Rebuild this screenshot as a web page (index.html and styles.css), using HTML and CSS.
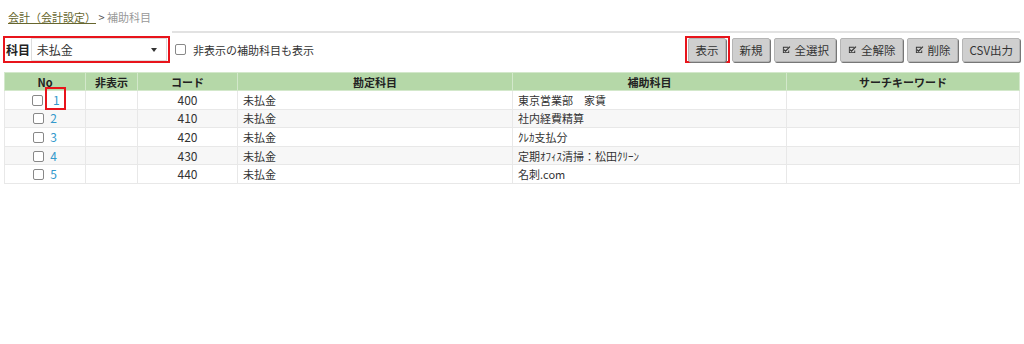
FILE: index.html
```html
<!DOCTYPE html>
<html lang="ja">
<head>
    <meta charset="UTF-8">
    <meta name="viewport" content="width=device-width, initial-scale=1.0">
    <title>補助科目</title>
    <link rel="stylesheet" href="styles.css">
</head>
<body>
    <div class="page">
        <div class="crumb">
            <a href="#">会計（会計設定）</a> <span class="sep">&gt;</span> 補助科目
        </div>
        <div class="rule"></div>
        <div class="toolbar">
            <div class="filter">
                <div class="field mark">
                    <span class="field-label">科目</span>
                    <div class="select">未払金<span class="caret"></span></div>
                </div>
                <label class="chk"><span class="box"></span>非表示の補助科目も表示</label>
            </div>
            <div class="buttons">
                <span class="btn-wrap mark"><button class="btn">表示</button></span>
                <button class="btn">新規</button>
                <button class="btn"><svg class="ico" viewBox="0 0 10 10"><path d="M1 2h6v1H2v5h5V6h1v3H1z"/><path d="M2.6 4.6l1.3 1.3L8.4 1.4l.9.9-5.4 5.4-2.2-2.2z"/></svg>全選択</button>
                <button class="btn"><svg class="ico" viewBox="0 0 10 10"><path d="M1 2h6v1H2v5h5V6h1v3H1z"/><path d="M2.6 4.6l1.3 1.3L8.4 1.4l.9.9-5.4 5.4-2.2-2.2z"/></svg>全解除</button>
                <button class="btn"><svg class="ico" viewBox="0 0 10 10"><path d="M1 2h6v1H2v5h5V6h1v3H1z"/><path d="M2.6 4.6l1.3 1.3L8.4 1.4l.9.9-5.4 5.4-2.2-2.2z"/></svg>削除</button>
                <button class="btn">CSV出力</button>
            </div>
        </div>
        <table class="list">
            <thead>
                <tr>
                    <th class="c-no">No</th>
                    <th class="c-hide">非表示</th>
                    <th class="c-code">コード</th>
                    <th class="c-acc">勘定科目</th>
                    <th class="c-sub">補助科目</th>
                    <th>サーチキーワード</th>
                </tr>
            </thead>
            <tbody>
                <tr>
                    <td class="num"><span class="box"></span><a href="#" class="mark-link">1</a></td>
                    <td></td>
                    <td class="center">400</td>
                    <td>未払金</td>
                    <td>東京営業部　家賃</td>
                    <td></td>
                </tr>
                <tr>
                    <td class="num"><span class="box"></span><a href="#">2</a></td>
                    <td></td>
                    <td class="center">410</td>
                    <td>未払金</td>
                    <td>社内経費精算</td>
                    <td></td>
                </tr>
                <tr>
                    <td class="num"><span class="box"></span><a href="#">3</a></td>
                    <td></td>
                    <td class="center">420</td>
                    <td>未払金</td>
                    <td>ｸﾚｶ支払分</td>
                    <td></td>
                </tr>
                <tr>
                    <td class="num"><span class="box"></span><a href="#">4</a></td>
                    <td></td>
                    <td class="center">430</td>
                    <td>未払金</td>
                    <td>定期ｵﾌｨｽ清掃：松田ｸﾘｰﾝ</td>
                    <td></td>
                </tr>
                <tr>
                    <td class="num"><span class="box"></span><a href="#">5</a></td>
                    <td></td>
                    <td class="center">440</td>
                    <td>未払金</td>
                    <td>名刺.com</td>
                    <td></td>
                </tr>
            </tbody>
        </table>
    </div>
</body>
</html>
```

FILE: styles.css
```css
*{
    margin: 0;
    padding: 0;
    box-sizing: border-box;
}
body{
    background-color: #fff;
    font-family: "Noto Sans CJK JP", "Noto Sans", sans-serif;
    font-size: 11px;
    color: #333;
}
.page{
    padding: 0 4px;
}
.crumb{
    padding: 9px 4px 0;
    height: 31px;
    font-size: 11px;
    color: #999;
}
.crumb a{
    color: #66662e;
    text-decoration: underline;
}
.crumb .sep{
    color: #555;
}
.rule{
    height: 2px;
    margin-left: 168px;
    background-color: #e2e2e2;
}
.toolbar{
    display: flex;
    justify-content: space-between;
    align-items: center;
    margin-top: 3px;
    height: 27px;
}
.filter{
    display: flex;
    align-items: center;
}
.mark{
    border: 2px solid #e8141b;
}
.field{
    display: flex;
    align-items: center;
    height: 27px;
    width: 167px;
    margin-left: -1px;
    padding: 0 1px;
}
.field-label{
    font-size: 12px;
    font-weight: bold;
    color: #222;
    width: 25px;
}
.select{
    position: relative;
    width: 137px;
    height: 23px;
    line-height: 21px;
    border: 1px solid #ddd;
    padding-left: 5px;
    font-size: 12px;
    color: #333;
}
.caret{
    position: absolute;
    right: 9px;
    top: 9px;
    border-left: 3px solid transparent;
    border-right: 3px solid transparent;
    border-top: 4px solid #333;
}
.chk{
    display: flex;
    align-items: center;
    margin-left: 5px;
    color: #333;
}
.box{
    display: inline-block;
    width: 11px;
    height: 11px;
    border: 1px solid #888;
    border-radius: 2px;
    background-color: #fff;
}
.chk .box{
    margin-right: 7px;
}
.buttons{
    display: flex;
    align-items: center;
    gap: 4px;
}
.btn-wrap{
    display: flex;
    height: 27px;
    align-items: center;
    padding: 0 2px 0 1px;
    margin-right: -2px;
}
.btn{
    display: flex;
    align-items: center;
    height: 24px;
    padding: 0 6px 0 7px;
    font-family: "Noto Sans CJK JP", "Noto Sans", sans-serif;
    font-size: 11.5px;
    color: #333;
    background-color: #cfcfcf;
    border: 1px solid #b5b5b5;
    border-radius: 2px;
    box-shadow: 1px 1px 0 #777;
    cursor: pointer;
}
.ico{
    width: 9px;
    height: 9px;
    margin-right: 4px;
    fill: #333;
}
.list{
    width: 1016px;
    margin-top: 9px;
    border-collapse: collapse;
    table-layout: fixed;
}
.list th{
    height: 18px;
    background-color: #b5d8a8;
    font-weight: bold;
    color: #222;
    border: 1px solid #d3e8cb;
    line-height: 16px;
}
.list .c-no{ width: 81px; }
.list .c-hide{ width: 52px; }
.list .c-code{ width: 100px; }
.list .c-acc{ width: 275px; }
.list .c-sub{ width: 274px; }
.list td{
    height: 18.6px;
    border: 1px solid #e8e8e8;
    padding: 0 5px;
    line-height: 16px;
    color: #333;
}
.list tbody tr:nth-child(even) td{
    background-color: #f7f7f7;
}
.list .center{
    text-align: center;
    font-size: 12px;
}
.list .num{
    text-align: center;
    padding: 0;
    font-size: 12px;
}
.list .num .box{
    vertical-align: -1px;
    margin-right: 6px;
}
.list a{
    color: #3399cc;
    text-decoration: none;
}
.list .mark-link{
    display: inline-block;
    width: 21px;
    height: 23px;
    line-height: 22px;
    margin: -5px -8px -3px -4px;
    padding-left: 6px;
    text-align: left;
    border: 2px solid #e8141b;
    position: relative;
    top: 0;
}
```
